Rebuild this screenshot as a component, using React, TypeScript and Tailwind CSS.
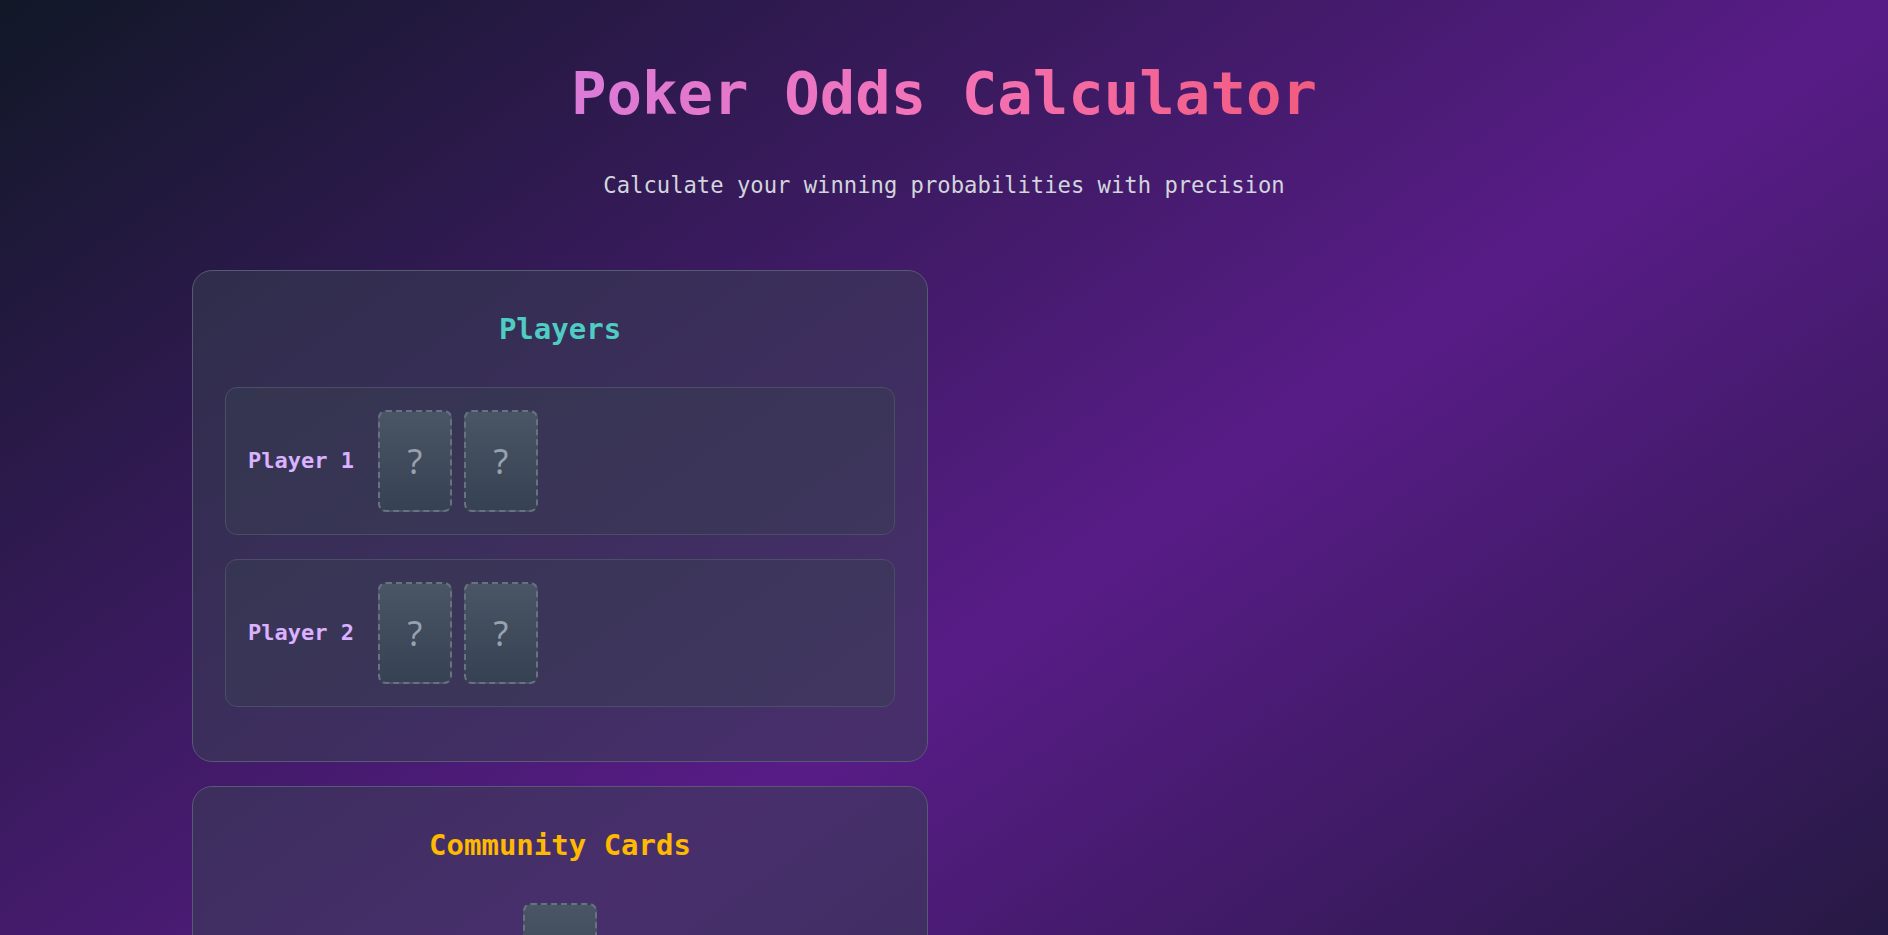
import { useState } from "react";

type Card = { rank: string; suit: string } | null;

const mono = "font-['DejaVu_Sans_Mono',monospace]";

function CardSlot({ card }: { card: Card }) {
  if (!card) {
    return (
      <div className="w-[74px] h-[102px] rounded-lg border-2 border-dashed border-gray-500 bg-linear-to-b from-gray-600 to-gray-700 flex items-center justify-center">
        <span className="font-['Noto_Sans',sans-serif] text-[34px] leading-none text-gray-400">?</span>
      </div>
    );
  }
  return (
    <div className="w-[74px] h-[102px] rounded-lg bg-white flex items-center justify-center">
      <span className="text-2xl text-gray-900">
        {card.rank}
        {card.suit}
      </span>
    </div>
  );
}

function PlayerRow({ name, cards }: { name: string; cards: Card[] }) {
  return (
    <div className="flex items-center gap-6 p-[22px] rounded-xl border border-[#4a4e66] bg-[#374151]/40">
      <span className="text-[22px] leading-7 font-bold text-purple-300">{name}</span>
      <div className="flex gap-3">
        {cards.map((c, i) => (
          <CardSlot card={c} key={i} />
        ))}
      </div>
    </div>
  );
}

function Panel({ title, color, children }: { title: string; color: string; children: React.ReactNode }) {
  return (
    <section className="rounded-[20px] border border-[#565a72] bg-[#374151]/50 px-8 pt-10 pb-[54px]">
      <h2 className={`text-[29px] leading-9 font-bold text-center mb-10 ${color}`}>{title}</h2>
      {children}
    </section>
  );
}

export default function App() {
  const [players] = useState([
    { name: "Player 1", cards: [null, null] as Card[] },
    { name: "Player 2", cards: [null, null] as Card[] },
  ]);
  const [board] = useState<Card[]>([null]);

  return (
    <div className={`min-h-screen bg-linear-to-br/srgb from-[#111827] via-[#581c87] to-[#111827] ${mono}`}>
      <div className="max-w-screen-2xl mx-auto px-4 pt-16 pb-48">
        <h1 className="text-[59px] leading-none font-bold text-center bg-linear-to-r/srgb from-[#c084fc] via-[#f472b6] to-[#ef4444] bg-clip-text text-transparent">
          Poker Odds Calculator
        </h1>
        <p className="mt-12 text-[22.2px] leading-7 text-center text-gray-300">
          Calculate your winning probabilities with precision
        </p>

        <div className="mt-[71px] grid grid-cols-2 gap-8">
          <div className="flex flex-col gap-6">
            <Panel title="Players" color="text-[#4ecdc4]">
              <div className="flex flex-col gap-6">
                {players.map((p) => (
                  <PlayerRow key={p.name} name={p.name} cards={p.cards} />
                ))}
              </div>
            </Panel>

            <Panel title="Community Cards" color="text-amber-400">
              <div className="flex justify-center gap-3">
                {board.map((c, i) => (
                  <CardSlot card={c} key={i} />
                ))}
              </div>
            </Panel>

            <button className="py-4 rounded-xl bg-linear-to-r from-purple-600 to-pink-600 text-white text-xl font-bold">
              Calculate Odds
            </button>
          </div>
          <div />
        </div>
      </div>
    </div>
  );
}
